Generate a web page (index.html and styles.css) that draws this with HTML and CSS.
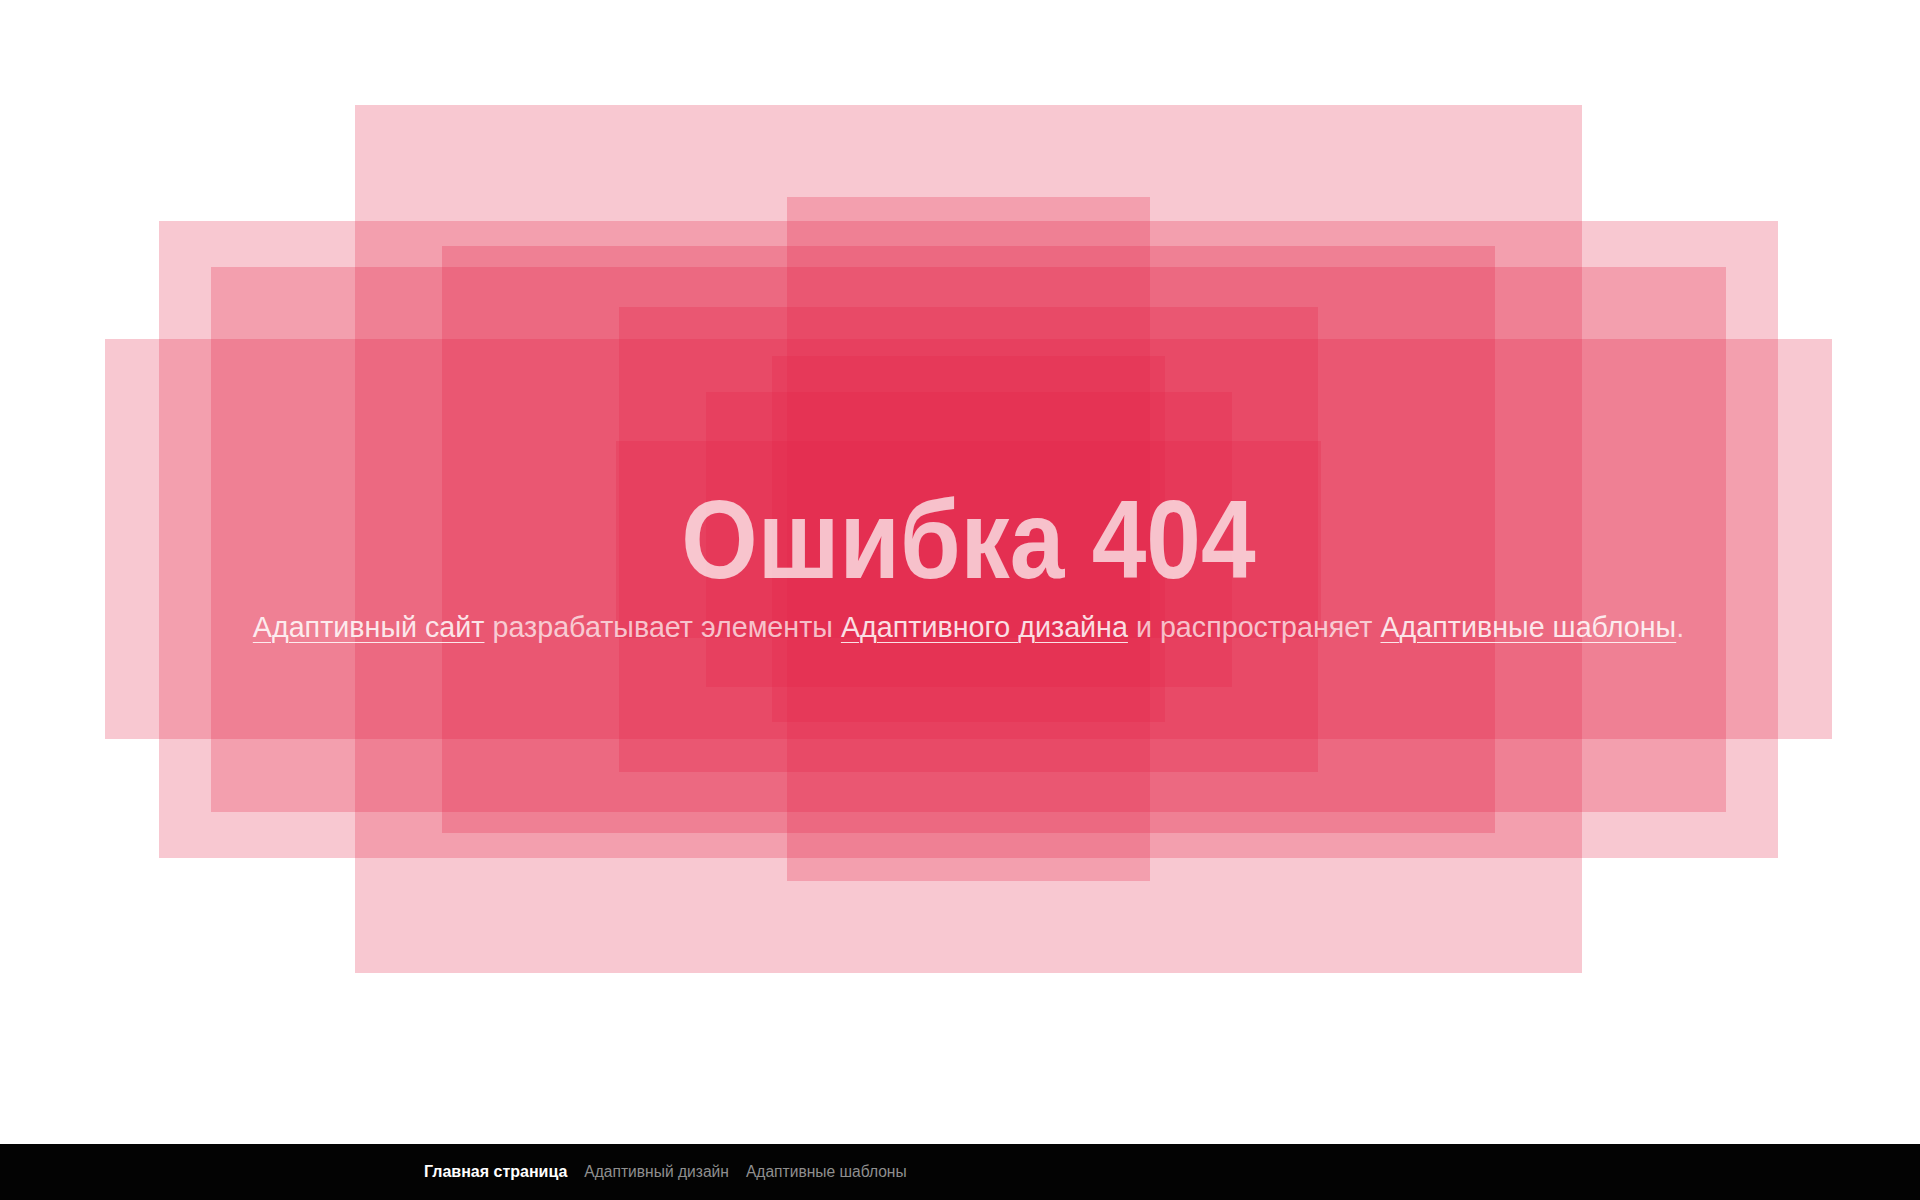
FILE: index.html
```html
<!DOCTYPE html>
<html lang="ru">
<head>
<meta charset="utf-8">
<title>Ошибка 404</title>
<link rel="stylesheet" href="styles.css">
</head>
<body>
<main class="stage">
  <div class="layers" aria-hidden="true">
    <span class="layer l1"></span>
    <span class="layer l2"></span>
    <span class="layer l3"></span>
    <span class="layer l4"></span>
    <span class="layer l5"></span>
    <span class="layer l6"></span>
    <span class="layer l7"></span>
    <span class="layer l8"></span>
    <span class="layer l9"></span>
    <span class="layer l10"></span>
  </div>
  <section class="message">
    <h1 class="title">Ошибка 404</h1>
    <p class="lead"><a href="#">Адаптивный сайт</a> разрабатывает элементы <a href="#">Адаптивного дизайна</a> и распространяет <a href="#">Адаптивные шаблоны</a>.</p>
  </section>
</main>
<footer class="footer">
  <nav class="nav">
    <a class="nav-link active" href="#">Главная страница</a>
    <a class="nav-link" href="#">Адаптивный дизайн</a>
    <a class="nav-link" href="#">Адаптивные шаблоны</a>
  </nav>
</footer>
</body>
</html>
```
FILE: styles.css
```css
html, body {
  margin: 0;
  padding: 0;
  background: #ffffff;
}

body {
  font-family: "Liberation Sans", Arial, sans-serif;
  width: 1920px;
  height: 1200px;
  overflow: hidden;
  display: flex;
  flex-direction: column;
}

.stage {
  position: relative;
  height: 1144px;
  flex: none;
  display: flex;
  justify-content: center;
  padding-left: 17px;
}

.layers {
  position: absolute;
  inset: 0;
}

.layer {
  position: absolute;
  display: block;
  background: rgba(227, 36, 70, 0.25);
}

.l1  { left: 355px; top: 105px; width: 1227px; height: 868px; }
.l2  { left: 159px; top: 221px; width: 1619px; height: 637px; }
.l3  { left: 211px; top: 267px; width: 1515px; height: 545px; }
.l4  { left: 105px; top: 339px; width: 1727px; height: 400px; }
.l5  { left: 442px; top: 246px; width: 1053px; height: 587px; }
.l6  { left: 787px; top: 197px; width: 363px;  height: 684px; }
.l7  { left: 619px; top: 307px; width: 699px;  height: 465px; }
.l8  { left: 772px; top: 356px; width: 393px;  height: 366px; }
.l9  { left: 706px; top: 392px; width: 526px;  height: 295px; }
.l10 { left: 616px; top: 441px; width: 705px;  height: 197px; }

.message {
  position: relative;
  z-index: 1;
  padding-top: 484px;
  text-align: center;
  display: flex;
  flex-direction: column;
  align-items: center;
}

.title {
  margin: 0;
  font-size: 112px;
  line-height: 112px;
  font-weight: bold;
  color: rgba(255, 255, 255, 0.7);
  transform: scaleX(0.877);
  white-space: nowrap;
}

.lead {
  margin: 13px 0 0;
  font-size: 28.7px;
  line-height: 36px;
  color: rgba(255, 255, 255, 0.7);
  white-space: nowrap;
}

.lead a {
  color: rgba(255, 255, 255, 0.85);
  text-decoration: underline;
  text-decoration-thickness: 1px;
  text-underline-offset: 5px;
}

.footer {
  height: 56px;
  flex: none;
  background: #030303;
  display: flex;
  align-items: center;
  padding-left: 424px;
}

.nav {
  display: flex;
  align-items: baseline;
  gap: 17px;
}

.nav-link {
  font-size: 15.6px;
  color: #8f8f8f;
  text-decoration: none;
}

.nav-link.active {
  font-size: 16px;
  color: #ffffff;
  font-weight: bold;
}
```
